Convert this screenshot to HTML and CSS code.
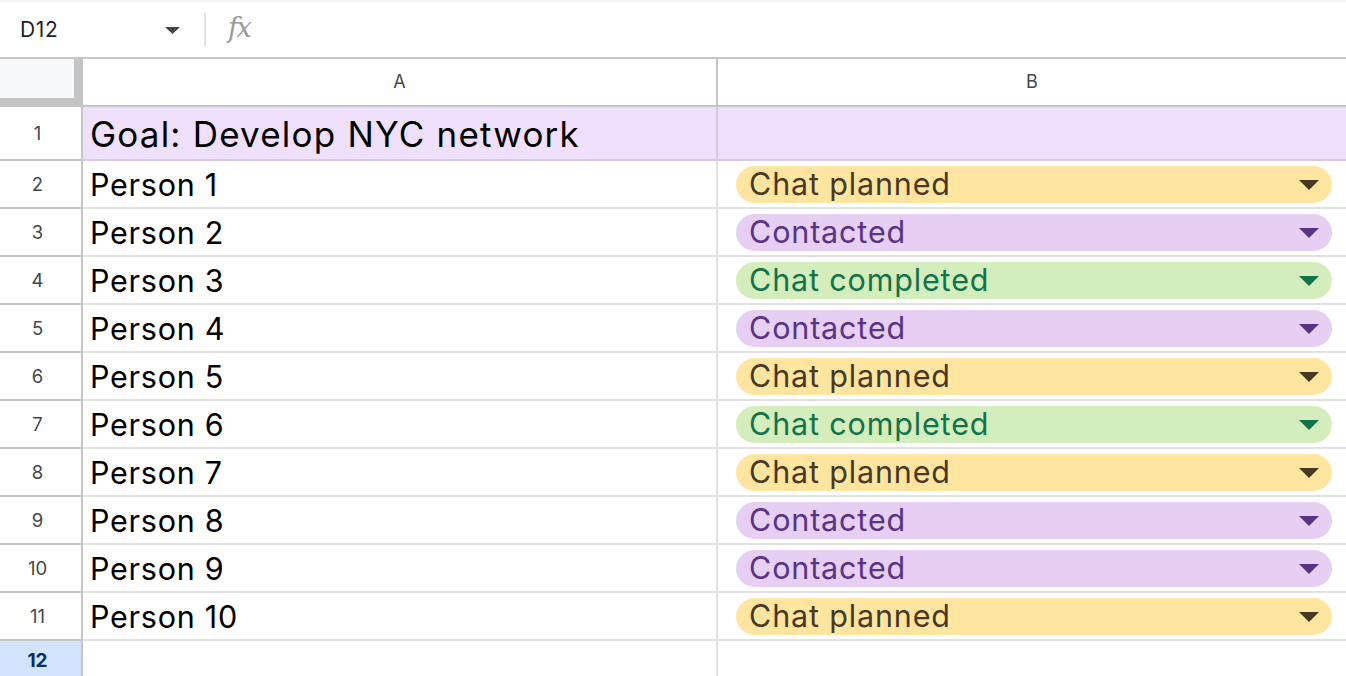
FILE: index.html
```html
<!DOCTYPE html>
<html>
<head>
<meta charset="utf-8">
<link rel="stylesheet" href="styles.css">
</head>
<body>
<div class="toolbar">
  <div class="namebox">
    <span class="cellref">D12</span>
    <svg class="nb-arrow" width="15" height="7" viewBox="0 0 15 7"><polygon points="0,0 15,0 7.5,7" fill="#444746"/></svg>
  </div>
  <div class="sep"></div>
  <span class="fx">fx</span>
</div>
<div class="grid">
  <div class="corner"></div>
  <div class="colhead colA">A</div>
  <div class="colhead colB">B</div>

  <div class="rowhead r1">1</div>
  <div class="cell colA goal r1">Goal: Develop NYC network</div>
  <div class="cell colB goal r1"></div>

  <div class="rowhead">2</div>
  <div class="cell colA">Person 1</div>
  <div class="cell colB"><div class="chip planned"><span>Chat planned</span><svg width="20" height="10" viewBox="0 0 20 10"><polygon points="0,0 20,0 10,10"/></svg></div></div>

  <div class="rowhead">3</div>
  <div class="cell colA">Person 2</div>
  <div class="cell colB"><div class="chip contacted"><span>Contacted</span><svg width="20" height="10" viewBox="0 0 20 10"><polygon points="0,0 20,0 10,10"/></svg></div></div>

  <div class="rowhead">4</div>
  <div class="cell colA">Person 3</div>
  <div class="cell colB"><div class="chip completed"><span>Chat completed</span><svg width="20" height="10" viewBox="0 0 20 10"><polygon points="0,0 20,0 10,10"/></svg></div></div>

  <div class="rowhead">5</div>
  <div class="cell colA">Person 4</div>
  <div class="cell colB"><div class="chip contacted"><span>Contacted</span><svg width="20" height="10" viewBox="0 0 20 10"><polygon points="0,0 20,0 10,10"/></svg></div></div>

  <div class="rowhead">6</div>
  <div class="cell colA">Person 5</div>
  <div class="cell colB"><div class="chip planned"><span>Chat planned</span><svg width="20" height="10" viewBox="0 0 20 10"><polygon points="0,0 20,0 10,10"/></svg></div></div>

  <div class="rowhead">7</div>
  <div class="cell colA">Person 6</div>
  <div class="cell colB"><div class="chip completed"><span>Chat completed</span><svg width="20" height="10" viewBox="0 0 20 10"><polygon points="0,0 20,0 10,10"/></svg></div></div>

  <div class="rowhead">8</div>
  <div class="cell colA">Person 7</div>
  <div class="cell colB"><div class="chip planned"><span>Chat planned</span><svg width="20" height="10" viewBox="0 0 20 10"><polygon points="0,0 20,0 10,10"/></svg></div></div>

  <div class="rowhead">9</div>
  <div class="cell colA">Person 8</div>
  <div class="cell colB"><div class="chip contacted"><span>Contacted</span><svg width="20" height="10" viewBox="0 0 20 10"><polygon points="0,0 20,0 10,10"/></svg></div></div>

  <div class="rowhead">10</div>
  <div class="cell colA">Person 9</div>
  <div class="cell colB"><div class="chip contacted"><span>Contacted</span><svg width="20" height="10" viewBox="0 0 20 10"><polygon points="0,0 20,0 10,10"/></svg></div></div>

  <div class="rowhead">11</div>
  <div class="cell colA">Person 10</div>
  <div class="cell colB"><div class="chip planned"><span>Chat planned</span><svg width="20" height="10" viewBox="0 0 20 10"><polygon points="0,0 20,0 10,10"/></svg></div></div>

  <div class="rowhead selected">12</div>
  <div class="cell colA last"></div>
  <div class="cell colB last"></div>
</div>
</body>
</html>
```

FILE: styles.css
```css
* { box-sizing: border-box; }
html, body { margin: 0; padding: 0; }
body {
  width: 1346px;
  height: 676px;
  overflow: hidden;
  background: #fff;
  font-family: Inter, "Liberation Sans", sans-serif;
  color: #000;
}
.toolbar {
  height: 59px;
  border-top: 2px solid #f3f4f6;
  border-bottom: 2px solid #c4c7c5;
  display: flex;
  align-items: center;
}
.namebox {
  width: 190px;
  display: flex;
  align-items: center;
  justify-content: space-between;
  padding-left: 20px;
  padding-right: 10px;
}
.cellref {
  font-size: 21px;
  color: #1f1f1f;
  letter-spacing: 0.6px;
}
.nb-arrow { margin-top: 1px; }
.sep {
  width: 2px;
  height: 33px;
  background: #e0e2e4;
  margin-left: 14px;
}
.fx {
  font-family: "DejaVu Serif", "Liberation Serif", serif;
  font-style: italic;
  font-size: 27px;
  color: #9a9a9a;
  margin-left: 22px;
  margin-top: -4px;
  letter-spacing: -1.5px;
}
.grid {
  display: grid;
  grid-template-columns: 83px 635px 1fr;
  grid-template-rows: 48px 54px repeat(10, 48px) 48px;
}
.corner {
  background: #f8f9fa;
  border-right: 9px solid #c4c4c4;
  border-bottom: 9px solid #c4c4c4;
}
.colhead {
  display: flex;
  align-items: center;
  justify-content: center;
  font-size: 18px;
  color: #444746;
  border-bottom: 2px solid #c4c7c5;
  border-right: 2px solid #c4c7c5;
  padding-bottom: 1px;
}
.colhead.colB { border-right: none; }
.rowhead {
  display: flex;
  align-items: center;
  justify-content: center;
  font-size: 18.5px;
  color: #444746;
  border-right: 2px solid #c4c7c5;
  border-bottom: 2px solid #c4c7c5;
  padding-right: 6px;
}
.rowhead.selected {
  background: #d3e3fd;
  color: #0b2b5e;
  font-weight: 700;
  font-size: 19px;
  padding-bottom: 9px;
  border-bottom: none;
}
.cell {
  border-right: 2px solid #e1e1e1;
  border-bottom: 2px solid #e1e1e1;
  display: flex;
  align-items: center;
  padding-left: 7px;
  font-size: 30.5px;
  letter-spacing: 0.75px;
  color: #000;
}
.cell.last { border-bottom: none; }
.cell.colB { border-right: none; padding-left: 18px; padding-right: 14px; }
.cell.goal {
  background: #efe1fd;
  border-color: #d6cae4;
  font-size: 35px;
  letter-spacing: 1.2px;
  padding-top: 2px;
}
.chip {
  flex: 1;
  height: 37px;
  margin-top: 1px;
  border-radius: 19px;
  display: flex;
  align-items: center;
  justify-content: space-between;
  padding-left: 13px;
  padding-right: 13px;
  font-size: 30.5px;
  letter-spacing: 0.85px;
}
.chip span { line-height: 1; margin-top: -1px; }
.chip.planned { background: #ffe5a0; color: #473822; fill: #473822; }
.chip.contacted { background: #e6cff2; color: #5a3286; fill: #5a3286; }
.chip.completed { background: #d4edbc; color: #11734b; fill: #11734b; }
```
